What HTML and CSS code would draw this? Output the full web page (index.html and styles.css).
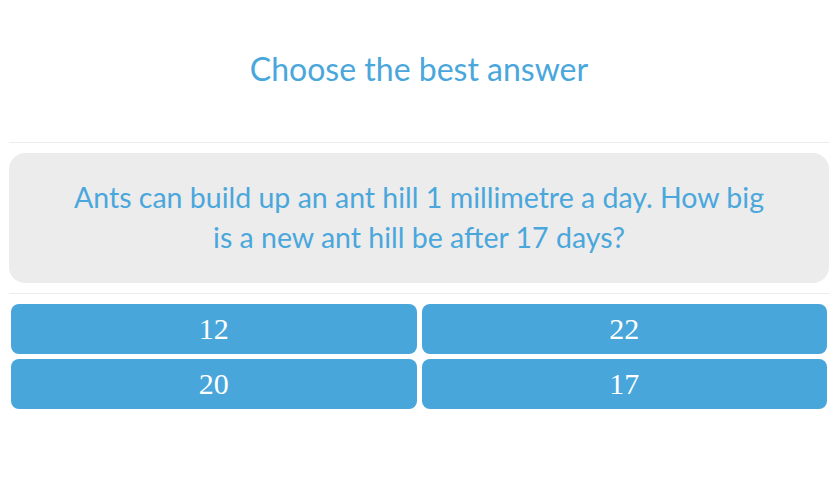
FILE: index.html
```html
<!DOCTYPE html>
<html lang="en">
    <head>
        <meta charset="UTF-8">
        <meta name="viewport" content="width=device-width, initial-scale=1.0">
        <title>Quiz</title>
        <link rel="stylesheet" href="styles.css">
    </head>
    <body>
        <div id="container">
            <div class="header">
                <h1>Choose the best answer</h1>
            </div>
            <div class="question">
                <p>Ants can build up an ant hill 1 millimetre a day. How big is a new ant hill be after 17 days?</p>
            </div>
            <div class="answers">
                <button type="button">12</button>
                <button type="button">22</button>
                <button type="button">20</button>
                <button type="button">17</button>
            </div>
        </div>
    </body>
</html>
```

FILE: styles.css
```css
* {
    margin: 0;
    padding: 0;
    box-sizing: border-box;
}

body {
    font-family: "Lato", "Liberation Sans", sans-serif;
    background: #fff;
}

#container {
    padding: 0 11px 0 9px;
}

.header {
    height: 143px;
    display: flex;
    align-items: center;
    justify-content: center;
    border-bottom: 1px solid #ececec;
}

.header h1 {
    font-size: 32px;
    font-weight: normal;
    color: #4aa7dc;
    padding-bottom: 6px;
}

.question {
    margin-top: 10px;
    background: #ececec;
    border-radius: 16px;
    height: 130px;
    display: flex;
    align-items: center;
    justify-content: center;
    padding: 0 55px 2px;
}

.question p {
    font-size: 28.5px;
    line-height: 40px;
    color: #4aa7dc;
    text-align: center;
}

.answers {
    margin-top: 10px;
    border-top: 1px solid #ececec;
    padding: 10px 2px 0 2px;
    display: grid;
    grid-template-columns: 1fr 1fr;
    gap: 5px;
}

.answers button {
    height: 50px;
    border: 0;
    border-radius: 8px;
    background: #49a6da;
    color: #fff;
    font-family: "Liberation Serif", "Times New Roman", serif;
    font-size: 30px;
}
```
